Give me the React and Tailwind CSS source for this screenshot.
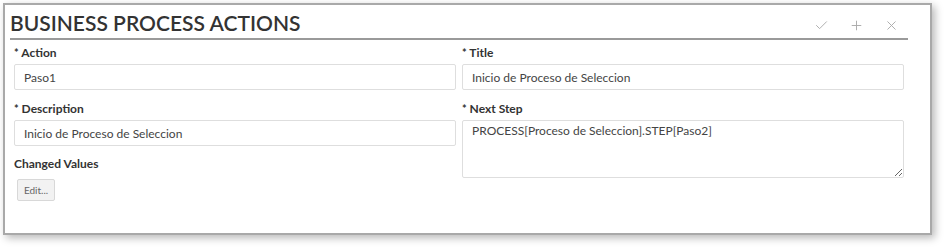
import { Check, Plus, X } from "lucide-react";

const Label = ({ children }) => (
  <div className="h-[16px] text-[12px] leading-[16px] font-bold text-[#333]">
    <span className="text-[11px]">*</span> {children}
  </div>
);

const Field = ({ label, value }) => (
  <div className="flex flex-col">
    <Label>{label}</Label>
    <input
      readOnly
      value={value}
      className="mt-[3px] h-[26px] w-full rounded-[2px] border border-[#dedede] bg-white px-[9px] text-[12px] text-[#444] outline-none"
    />
  </div>
);

export default function App() {
  return (
    <div className="min-h-[249px] bg-white pl-[3px] pt-[3px] font-['Lato',_sans-serif]">
      <div className="h-[232px] w-[929px] border-2 border-[#a9a9a9] bg-white shadow-[3px_3px_8px_rgba(0,0,0,0.28)]">
        {/* Header */}
        <div className="ml-[5px] mr-[22px] flex h-[35px] items-end justify-between border-b-2 border-[#9a9a9a] pb-[3px]">
          <h1 className="text-[21px] leading-[24px] font-semibold text-[#333]">
            BUSINESS PROCESS ACTIONS
          </h1>
          <div className="mb-[2px] flex items-center gap-[20px] pr-[9px] text-[#aaa]">
            <Check size={15} strokeWidth={1.5} />
            <Plus size={15} strokeWidth={1.5} />
            <X size={15} strokeWidth={1.5} />
          </div>
        </div>

        {/* Body */}
        <div className="grid grid-cols-2 gap-x-[6px] pl-[9px] pr-[26px] pt-[5px]">
          <div className="flex flex-col">
            <Field label="Action" value="Paso1" />
            <div className="mt-[11px]">
              <Field label="Description" value="Inicio de Proceso de Seleccion" />
            </div>
            <div className="mt-[10px] text-[12px] leading-[16px] font-bold text-[#333]">
              Changed Values
            </div>
            <div className="mt-[7px] flex pl-[3px]">
              <button className="h-[22px] w-[38px] rounded-[2px] border border-[#d8d8d8] bg-[#f2f2f2] text-[10px] leading-[20px] text-[#666]">
                Edit...
              </button>
            </div>
          </div>
          <div className="flex flex-col">
            <Field label="Title" value="Inicio de Proceso de Seleccion" />
            <div className="mt-[11px] flex flex-col">
              <Label>Next Step</Label>
              <textarea
                readOnly
                value="PROCESS[Proceso de Seleccion].STEP[Paso2]"
                className="mt-[3px] h-[58px] w-full rounded-[2px] border border-[#dedede] bg-white px-[9px] py-[2px] text-[12px] leading-[16px] text-[#444] outline-none"
              />
            </div>
          </div>
        </div>
      </div>
    </div>
  );
}
